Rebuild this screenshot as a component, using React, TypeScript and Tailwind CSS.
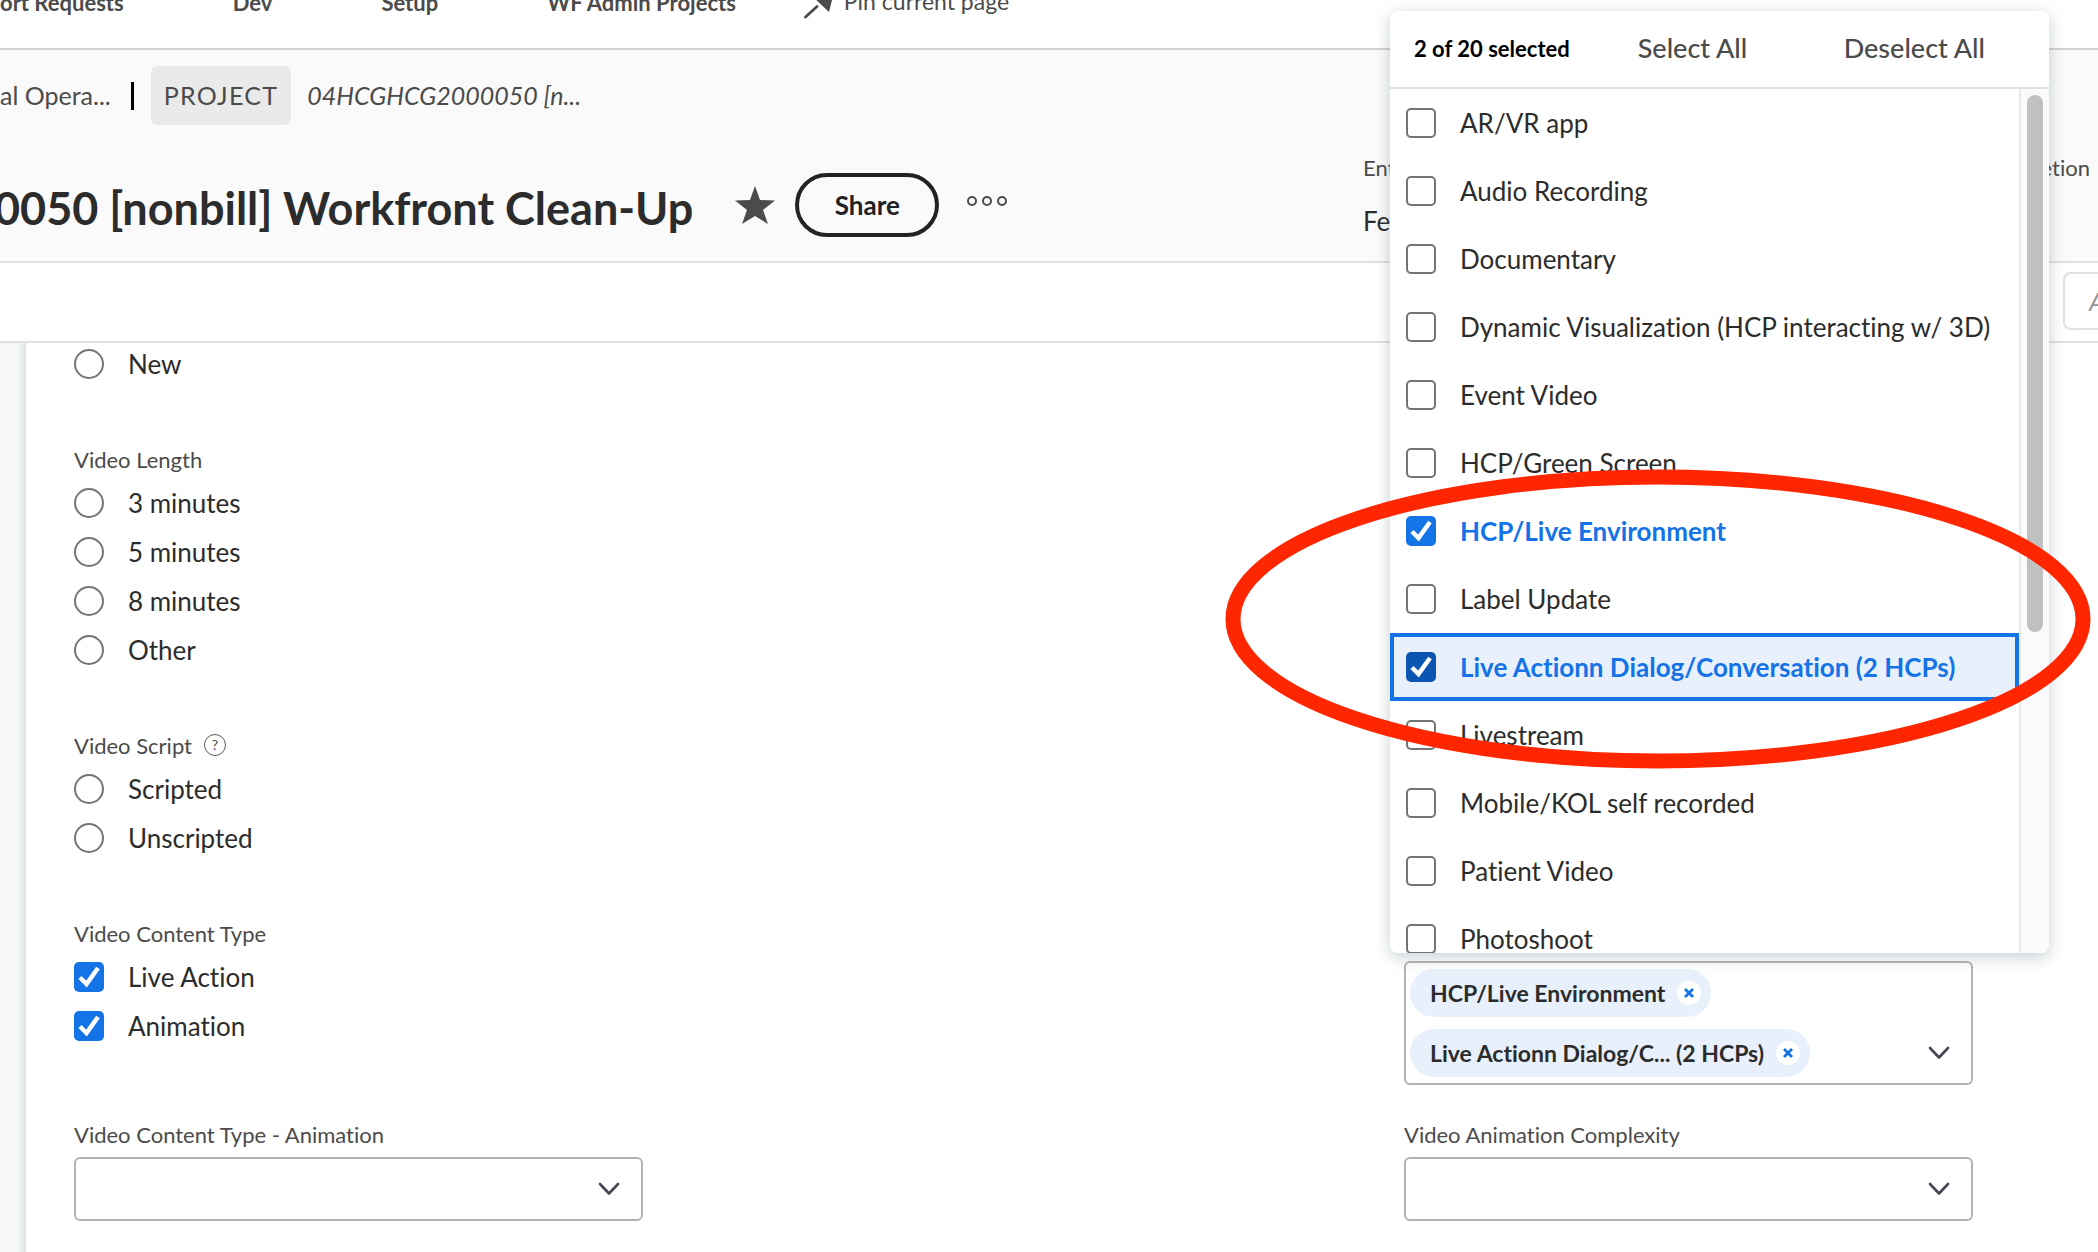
import { useState } from "react";
import { clsx } from "clsx";

const OPTIONS = [
  "AR/VR app",
  "Audio Recording",
  "Documentary",
  "Dynamic Visualization (HCP interacting w/ 3D)",
  "Event Video",
  "HCP/Green Screen",
  "HCP/Live Environment",
  "Label Update",
  "Live Actionn Dialog/Conversation (2 HCPs)",
  "Livestream",
  "Mobile/KOL self recorded",
  "Patient Video",
  "Photoshoot",
];

const ACTIVE_OPTION = "Live Actionn Dialog/Conversation (2 HCPs)";

const CHIPS = ["HCP/Live Environment", "Live Actionn Dialog/C... (2 HCPs)"];

function Chevron({ className }: { className?: string }) {
  return (
    <svg
      aria-hidden
      viewBox="0 0 22 14"
      className={clsx("pointer-events-none h-3.5 w-[22px]", className)}
      fill="none"
      stroke="#464652"
      strokeWidth="2.6"
      strokeLinecap="round"
      strokeLinejoin="round"
    >
      <path d="M2 2l9 9.5L20 2" />
    </svg>
  );
}

interface CheckboxProps {
  label: string;
  checked: boolean;
  onChange: () => void;
  active?: boolean;
  className?: string;
}

function Checkbox({ label, checked, onChange, active, className }: CheckboxProps) {
  return (
    <label className={clsx("flex items-center gap-6 whitespace-nowrap", className)}>
      <span className="grid h-[30px] w-[30px] shrink-0 place-items-center">
        <input
          type="checkbox"
          checked={checked}
          onChange={onChange}
          className={clsx(
            "col-start-1 row-start-1 h-[30px] w-[30px] appearance-none rounded-[5px]",
            !checked && "border-2 border-[#747474] bg-white",
            checked && (active ? "bg-[#0d55b3]" : "bg-[#1473e6]")
          )}
        />
        {checked && (
          <svg
            aria-hidden
            viewBox="0 0 30 30"
            className="pointer-events-none col-start-1 row-start-1 h-[30px] w-[30px]"
          >
            <path
              d="M6 15.500l6.500 6.500L24 6"
              fill="none"
              stroke="#fff"
              strokeWidth="4.500"
            />
          </svg>
        )}
      </span>
      {label}
    </label>
  );
}

function Radio({ label, name }: { label: string; name: string }) {
  return (
    <label className="flex h-[30px] items-center gap-6 text-[26px]">
      <input
        type="radio"
        name={name}
        className="h-[30px] w-[30px] appearance-none rounded-full border-2 border-[#747474] bg-white checked:border-[9px] checked:border-[#1473e6]"
      />
      {label}
    </label>
  );
}

function FieldGroup({
  title,
  help,
  children,
}: {
  title?: string;
  help?: boolean;
  children: React.ReactNode;
}) {
  return (
    <fieldset className="mb-[66px]">
      {title && (
        <legend className="mb-[15px] flex h-7 items-center text-[22px] text-[#4b4b4b]">
          {title}
          {help && (
            <button
              type="button"
              aria-label="Help"
              className="ml-3 grid h-[22px] w-[22px] place-items-center rounded-full border border-[#5a5a5a] text-sm leading-none"
            >
              ?
            </button>
          )}
        </legend>
      )}
      <div className="flex flex-col gap-[19px]">{children}</div>
    </fieldset>
  );
}

function SelectField({ id, label }: { id: string; label: string }) {
  return (
    <div className="flex flex-col gap-2">
      <label htmlFor={id} className="h-7 text-[22px] leading-7 text-[#4b4b4b]">
        {label}
      </label>
      <div className="grid items-center">
        <select
          id={id}
          className="col-start-1 row-start-1 h-16 w-full appearance-none rounded-md border-2 border-[#b3b3b3] bg-white px-4 text-[26px]"
        >
          <option value="" />
        </select>
        <Chevron className="col-start-1 row-start-1 mr-[23px] justify-self-end" />
      </div>
    </div>
  );
}

function TopNav() {
  return (
    <nav className="h-[50px] border-b-2 border-[#d3d3d3] bg-white">
      <div className="-mt-[13px] flex items-center whitespace-nowrap text-[22px] leading-[30px] text-[#4b4b4b]">
        <div className="flex gap-[109px] font-bold">
          <a href="#requests">ort Requests</a>
          <a href="#dev">Dev</a>
          <a href="#setup">Setup</a>
          <a href="#admin">WF Admin Projects</a>
        </div>
        <button type="button" className="ml-[68px] flex gap-3 text-[23px] leading-7">
          <svg aria-hidden viewBox="0 0 28 30" className="h-8 w-7" fill="#4b4b4b">
            <path d="M8 8l17 16 3-12-8-9z" />
            <path d="M1.500 29L13 18.500" stroke="#4b4b4b" strokeWidth="2.8" strokeLinecap="round" />
          </svg>
          Pin current page
        </button>
      </div>
    </nav>
  );
}

function ProjectHeader() {
  return (
    <header className="border-b-2 border-[#e1e1e1] bg-[#fafafa] pb-6 pt-4">
      <div className="flex h-[59px] items-center whitespace-nowrap text-[25px] text-[#4b4b4b]">
        <a href="#portfolio">al Opera...</a>
        <span aria-hidden className="ml-5 h-7 w-[3px] bg-black" />
        <span className="ml-[17px] flex h-full items-center rounded-md bg-[#eaeaea] px-[13px] tracking-wider">
          PROJECT
        </span>
        <a href="#project" className="ml-4 italic">
          04HCGHCG2000050 [n...
        </a>
      </div>
      <div className="mt-[29px] flex items-end whitespace-nowrap">
        <div className="flex h-16 items-center">
          <h1 className="-ml-1.5 pt-1.5 text-[45px] font-bold leading-[64px] text-[#2c2c2c]">
            0050 [nonbill] Workfront Clean-Up
          </h1>
          <button type="button" aria-label="Favorite" className="ml-[42px]">
            <svg aria-hidden viewBox="0 0 40 40" className="h-10 w-10" fill="#4b4b4b">
              <path d="M20 1l5 14 15 .5-12 9.500L33 39l-13-8-13 8 5-14L0 15.500 15 15z" />
            </svg>
          </button>
          <button
            type="button"
            className="ml-5 h-16 w-36 rounded-full border-4 border-[#222] text-[26px] font-bold leading-[52px] text-[#222]"
          >
            Share
          </button>
          <button type="button" aria-label="More" className="mb-2 ml-7 flex gap-[5px]">
            <span className="h-2.5 w-2.5 rounded-full border-2 border-[#4b4b4b]" />
            <span className="h-2.5 w-2.5 rounded-full border-2 border-[#4b4b4b]" />
            <span className="h-2.5 w-2.5 rounded-full border-2 border-[#4b4b4b]" />
          </button>
        </div>
        <dl className="ml-auto mr-2 flex h-[83px] w-[727px] justify-between text-[22px] leading-7 text-[#4b4b4b]">
          <div>
            <dt>Ent</dt>
            <dd className="mt-[25px] text-[26px] leading-7 text-[#2c2c2c]">Fe</dd>
          </div>
          <div>
            <dt>etion</dt>
          </div>
        </dl>
      </div>
    </header>
  );
}

function OptionsMenu({
  selected,
  onToggle,
}: {
  selected: string[];
  onToggle: (option: string) => void;
}) {
  return (
    <div className="absolute bottom-full left-[-16px] z-10 mb-2.5 w-[659px] overflow-hidden rounded-lg bg-white shadow-[0_4px_16px_rgba(70,95,105,0.3)]">
      <div className="flex h-[78px] items-center border-b-2 border-[#dde1e3] pb-0.5 pl-6 pr-16">
        <span className="text-[22px] font-bold text-black">2 of 20 selected</span>
        <button type="button" className="ml-[68px] text-[27px] font-medium text-[#4b4b4b]">
          Select All
        </button>
        <button type="button" className="ml-auto text-[27px] font-medium text-[#4b4b4b]">
          Deselect All
        </button>
      </div>
      <div className="flex h-[864px]">
        <ul className="min-w-0 flex-1 overflow-hidden">
          {OPTIONS.map((o) => {
            const checked = selected.includes(o);
            const active = o === ACTIVE_OPTION;
            return (
              <li key={o}>
                <Checkbox
                  label={o}
                  checked={checked}
                  active={active}
                  onChange={() => onToggle(o)}
                  className={clsx(
                    "h-[68px] border-4 px-3 text-[26px]",
                    active ? "border-[#1473e6] bg-[#e8f0fc]" : "border-transparent",
                    checked && "font-bold text-[#1473e6]"
                  )}
                />
              </li>
            );
          })}
        </ul>
        <div aria-hidden className="w-[30px] border-l-2 border-[#e8e8e8] bg-[#fafafa] px-1.5 pt-1.5">
          <div className="h-[537px] w-4 rounded-full bg-[#c1c1c1]" />
        </div>
      </div>
    </div>
  );
}

function MultiSelect() {
  const [selected, setSelected] = useState(["HCP/Live Environment", ACTIVE_OPTION]);

  const toggle = (option: string) =>
    setSelected((prev) =>
      prev.includes(option) ? prev.filter((o) => o !== option) : [...prev, option]
    );

  return (
    <div className="relative flex items-end justify-between rounded-md border-2 border-[#b3b3b3] bg-white px-1 py-1.5">
      <OptionsMenu selected={selected} onToggle={toggle} />
      {/* red callout around the picked options */}
      <svg
        aria-hidden
        viewBox="0 0 866 300"
        className="pointer-events-none absolute bottom-[314px] left-[-181px] z-20 h-[300px] w-[866px]"
        fill="none"
      >
        <ellipse cx="433" cy="150" rx="425" ry="142" stroke="#ff2600" strokeWidth="15" />
      </svg>
      <div className="flex flex-col items-start gap-3">
        {CHIPS.map((chip) => (
          <span
            key={chip}
            className="flex h-12 items-center gap-3 whitespace-nowrap rounded-full bg-[#e8f0fc] pl-5 pr-2.5 text-[23px] font-bold"
          >
            {chip}
            <button
              type="button"
              aria-label={`Remove ${chip}`}
              className="grid h-6 w-6 place-items-center rounded-full bg-white"
            >
              <svg aria-hidden viewBox="0 0 10 10" className="h-2.5 w-2.5" stroke="#1473e6" strokeWidth="2.8">
                <path d="M1 1l8 8M9 1L1 9" />
              </svg>
            </button>
          </span>
        ))}
      </div>
      <button type="button" aria-label="Toggle options" className="flex h-12 items-center pr-[17px]">
        <Chevron />
      </button>
    </div>
  );
}

export default function App() {
  const [types, setTypes] = useState<Record<string, boolean>>({
    "Live Action": true,
    Animation: true,
  });

  return (
    <div className="flex min-h-screen w-full flex-col overflow-hidden bg-white font-['Lato',sans-serif] text-[#2c2c2c] [font-variant-ligatures:none]">
      <TopNav />
      <ProjectHeader />

      <div className="flex h-20 justify-end border-b-2 border-[#e1e1e1] pt-[9px]">
        <button
          type="button"
          className="h-[58px] w-[35px] overflow-hidden rounded-l-lg border-2 border-r-0 border-[#dfe2e3] pl-6 text-left text-[26px] italic text-[#959595]"
        >
          A
        </button>
      </div>

      <div className="flex flex-1">
        <div className="flex w-[26px] justify-end bg-[#f8f8f8]">
          <div className="w-2.5 bg-linear-to-r from-[#f8f8f8] to-[#dde5e7]" />
        </div>
        <main className="flex flex-1 items-end justify-between bg-white pb-8 pl-12 pr-[125px] pt-1.5">
          <div className="w-[569px]">
            <FieldGroup>
              <Radio name="kind" label="New" />
            </FieldGroup>
            <FieldGroup title="Video Length">
              {["3 minutes", "5 minutes", "8 minutes", "Other"].map((o) => (
                <Radio key={o} name="length" label={o} />
              ))}
            </FieldGroup>
            <FieldGroup title="Video Script" help>
              <Radio name="script" label="Scripted" />
              <Radio name="script" label="Unscripted" />
            </FieldGroup>
            <FieldGroup title="Video Content Type">
              {Object.keys(types).map((t) => (
                <Checkbox
                  key={t}
                  label={t}
                  checked={types[t]}
                  onChange={() => setTypes({ ...types, [t]: !types[t] })}
                  className="h-[30px] text-[26px]"
                />
              ))}
            </FieldGroup>
            <div className="mt-20">
              <SelectField id="content-animation" label="Video Content Type - Animation" />
            </div>
          </div>

          <div className="flex w-[569px] flex-col gap-9">
            <MultiSelect />
            <SelectField id="animation-complexity" label="Video Animation Complexity" />
          </div>
        </main>
      </div>
    </div>
  );
}
